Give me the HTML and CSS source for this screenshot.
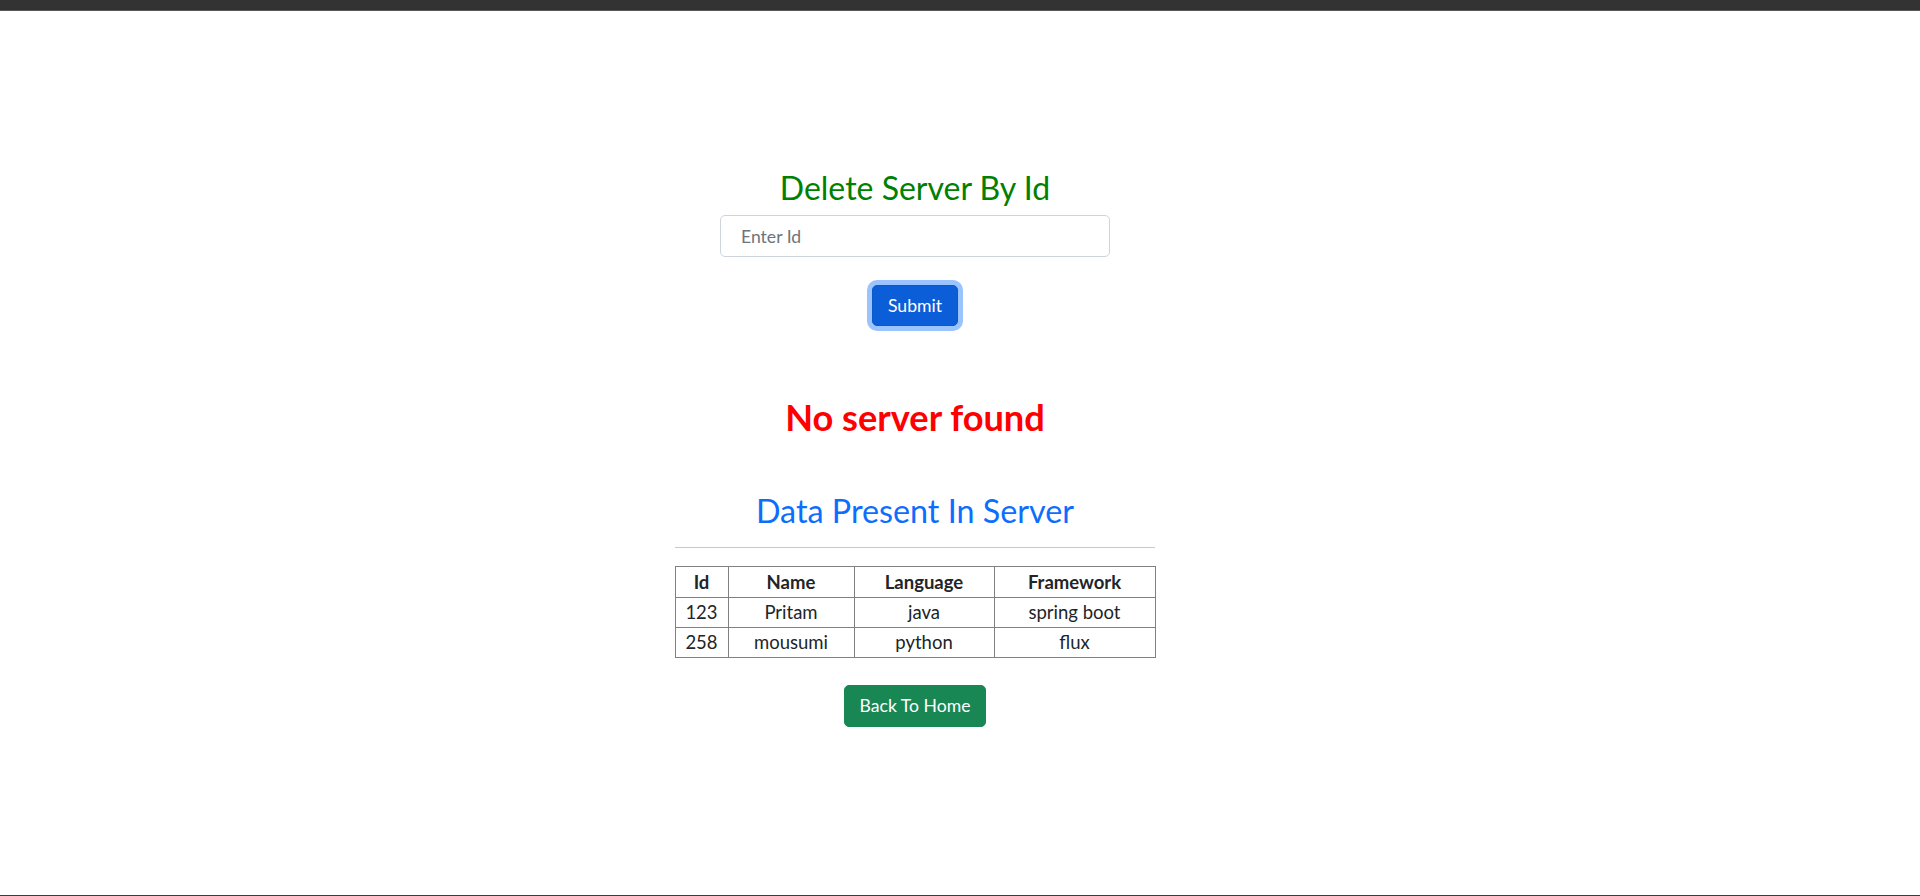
FILE: index.html
```html
<!DOCTYPE html>
<html lang="en">
<head>
<meta charset="utf-8">
<title>Delete Server By Id</title>
<link rel="stylesheet" href="styles.css">
</head>
<body>
<div class="topbar"></div>
<main class="page">
  <h2 class="title">Delete Server By Id</h2>
  <form class="form">
    <input class="field" type="text" placeholder="Enter Id">
    <button class="btn btn-primary" type="button">Submit</button>
  </form>
  <h2 class="error">No server found</h2>
  <h2 class="subtitle">Data Present In Server</h2>
  <hr class="rule">
  <table class="data">
    <colgroup>
      <col class="c-id"><col class="c-name"><col class="c-lang"><col class="c-fw">
    </colgroup>
    <thead>
      <tr><th>Id</th><th>Name</th><th>Language</th><th>Framework</th></tr>
    </thead>
    <tbody>
      <tr><td>123</td><td>Pritam</td><td>java</td><td>spring boot</td></tr>
      <tr><td>258</td><td>mousumi</td><td>python</td><td>flux</td></tr>
    </tbody>
  </table>
  <a class="btn btn-success" href="#">Back To Home</a>
</main>
<div class="bottombar"></div>
</body>
</html>
```
FILE: styles.css
```css
html, body {
  margin: 0;
  padding: 0;
}
body {
  min-height: 100vh;
  display: flex;
  flex-direction: column;
  background: #fff;
  color: #212529;
  font-family: Lato, "Liberation Sans", sans-serif;
}
.topbar {
  height: 10px;
  background: #333333;
  border-bottom: 1px solid #585858;
}
.bottombar {
  height: 1px;
  background: #3a3a3a;
}
.page {
  flex: 1;
  display: flex;
  flex-direction: column;
  align-items: center;
  padding-right: 90px;
}
.title, .error, .subtitle {
  margin: 0;
  height: 40px;
  line-height: 40px;
  font-size: 32px;
  font-weight: 400;
  text-align: center;
}
.title {
  margin-top: 157px;
  color: #008000;
}
.form {
  display: flex;
  flex-direction: column;
  align-items: center;
  margin: 7px 0 0;
}
.field {
  box-sizing: border-box;
  width: 390px;
  height: 42px;
  padding: 7px 20px;
  border: 1px solid #ced4da;
  border-radius: 5px;
  font-family: inherit;
  font-size: 17.6px;
  line-height: 26px;
  color: #212529;
  outline: none;
}
.field::placeholder {
  color: #6c757d;
}
.btn {
  box-sizing: border-box;
  display: inline-block;
  border: 1px solid transparent;
  border-radius: 5px;
  font-family: inherit;
  font-size: 17.6px;
  line-height: 26px;
  color: #fff;
  text-decoration: none;
  text-align: center;
  cursor: pointer;
}
.btn-primary {
  margin-top: 28px;
  height: 41px;
  padding: 6px 15px;
  background: #0b5ed7;
  border-color: #0a58ca;
  box-shadow: 0 0 0 5px #9bc3fe;
}
.error {
  margin-top: 71px;
  font-size: 36.2px;
  font-weight: 700;
  color: #ff0000;
}
.subtitle {
  margin-top: 54px;
  font-size: 32.3px;
  color: #0d6efd;
}
.rule {
  box-sizing: border-box;
  width: 480px;
  height: 1px;
  margin: 16px 0 0;
  border: 0;
  background: #c8c9ca;
}
.data {
  margin-top: 18px;
  width: 480px;
  border-collapse: collapse;
  table-layout: fixed;
  font-size: 18.5px;
}
.c-id { width: 53px; }
.c-name { width: 126px; }
.c-lang { width: 140px; }
.c-fw { width: 161px; }
.data th, .data td {
  border: 1px solid #808080;
  height: 29px;
  padding: 0;
  line-height: 29px;
  text-align: center;
  color: #212529;
}
.data th {
  height: 30px;
  line-height: 30px;
  font-weight: 700;
}
.btn-success {
  margin-top: 27px;
  height: 42px;
  padding: 7px 14.5px;
  background: #198754;
  border-color: #198754;
}
```
